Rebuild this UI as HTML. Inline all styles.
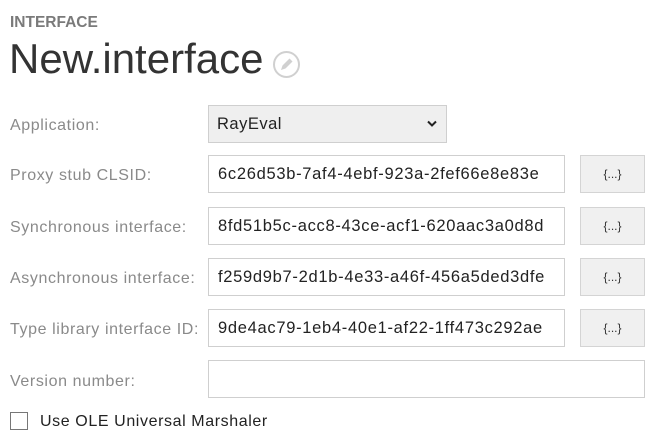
<!DOCTYPE html>
<html><head><style>
body{margin:0;width:654px;height:445px;background:#fff;font-family:"Liberation Sans",sans-serif;position:relative;overflow:hidden}
.a{position:absolute}
.lbl{position:absolute;left:10px;font-size:16px;letter-spacing:0.6px;color:#8a8a8a}
.fld{position:absolute;left:208px;width:357px;height:38px;border:1px solid #cfcfcf;box-sizing:border-box;font-size:16.5px;letter-spacing:0.7px;color:#222;line-height:36px;padding-left:9px;white-space:nowrap;overflow:hidden}
.btn{position:absolute;left:580px;width:65px;height:38px;border:1px solid #d4d4d4;background:#f0f0f0;box-sizing:border-box;font-size:12px;color:#333;text-align:center;line-height:36px}
</style></head><body>
<div class="a" style="left:10px;top:14px;font-size:15.5px;font-weight:bold;color:#7a7a7a">INTERFACE</div>
<div class="a" style="left:9px;top:35px;font-size:42px;color:#333">New.interface</div>
<svg class="a" style="left:272px;top:50px" width="29" height="29" viewBox="0 0 29 29"><circle cx="14.5" cy="14.5" r="12.5" fill="none" stroke="#d0d0d0" stroke-width="2"/><path d="M9 20l1.5-4.5 7-7 3 3-7 7z" fill="#d0d0d0"/></svg>
<div class="lbl" style="top:117px">Application:</div>
<div class="a" style="left:208px;top:105px;width:239px;height:38px;border:1px solid #cfcfcf;background:#efefef;box-sizing:border-box;font-size:16.5px;letter-spacing:0.5px;line-height:36px;padding-left:8px;color:#222">RayEval
<svg class="a" style="left:218px;top:14px" width="10" height="8" viewBox="0 0 10 8"><path d="M1 1.5l4 4 4-4" fill="none" stroke="#222" stroke-width="2"/></svg></div>
<div class="lbl" style="top:167px">Proxy stub CLSID:</div>
<div class="fld" style="top:155px">6c26d53b-7af4-4ebf-923a-2fef66e8e83e</div>
<div class="btn" style="top:155px">{...}</div>
<div class="lbl" style="top:219px">Synchronous interface:</div>
<div class="fld" style="top:207px">8fd51b5c-acc8-43ce-acf1-620aac3a0d8d</div>
<div class="btn" style="top:207px">{...}</div>
<div class="lbl" style="top:270px">Asynchronous interface:</div>
<div class="fld" style="top:258px">f259d9b7-2d1b-4e33-a46f-456a5ded3dfe</div>
<div class="btn" style="top:258px">{...}</div>
<div class="lbl" style="top:321px">Type library interface ID:</div>
<div class="fld" style="top:309px">9de4ac79-1eb4-40e1-af22-1ff473c292ae</div>
<div class="btn" style="top:309px">{...}</div>
<div class="lbl" style="top:373px">Version number:</div>
<div class="fld" style="top:360px;width:437px;height:38px"></div>
<div class="a" style="left:10px;top:412px;width:18px;height:18px;border:1px solid #777;box-sizing:border-box"></div>
<div class="a" style="left:40px;top:413px;font-size:16px;letter-spacing:0.6px;color:#222">Use OLE Universal Marshaler</div>
</body></html>
